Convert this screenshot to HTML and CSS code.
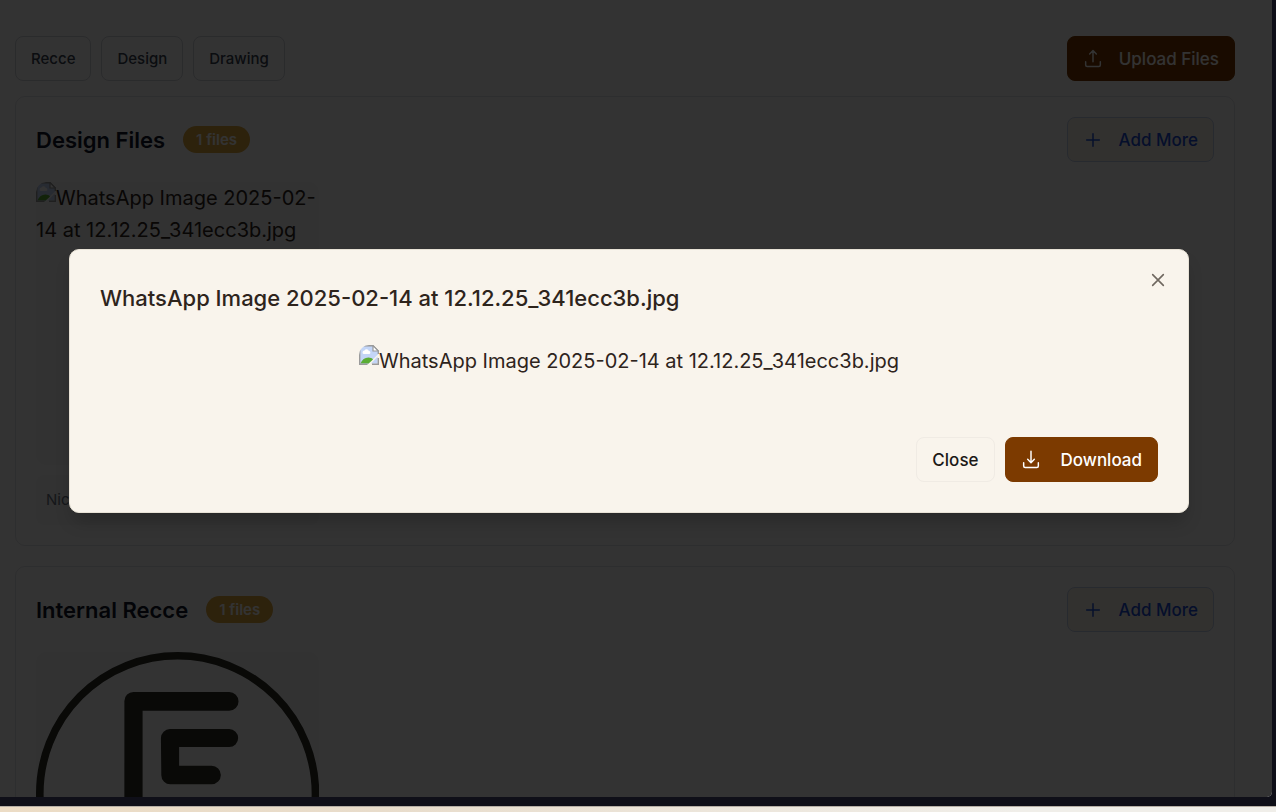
FILE: index.html
```html
<!DOCTYPE html>
<html lang="en">
<head>
<meta charset="utf-8">
<title>Project Files</title>
<link rel="stylesheet" href="styles.css">
</head>
<body>
<svg class="defs" aria-hidden="true">
  <symbol id="i-upload" viewBox="0 0 15 15"><path d="M7.500 9.500V1.300M5 3.700l2.500-2.500L10 3.700M2 9.500V12a1.100 1.100 0 0 0 1.100 1.100h8.800A1.100 1.100 0 0 0 13 12V9.500"/></symbol>
  <symbol id="i-download" viewBox="0 0 15 15"><path d="M7.500 1v8.400M5 7l2.500 2.500L10 7M2 9.500V12a1.100 1.100 0 0 0 1.100 1.100h8.800A1.100 1.100 0 0 0 13 12V9.500"/></symbol>
  <symbol id="i-plus" viewBox="0 0 15 15"><path d="M7.500 2.750v9.500M2.750 7.500h9.500"/></symbol>
  <symbol id="i-close" viewBox="0 0 15 15"><path d="M3.500 3.500l8 8M11.500 3.500l-8 8"/></symbol>
  <symbol id="i-missing" viewBox="0 0 20 20">
    <path d="M.7 .7H14L19.300 6V9L9 19.300H.7z" fill="#c3d5f7"/>
    <path d="M1.400 18.600c1.500-4 4.500-6 8-6 2 0 3.500.7 4.600 1.800L9.600 18.600z" fill="#5bad35"/>
    <path d="M18.600 11.500V18.600H12z" fill="#c3d5f7"/>
    <path d="M.7 .7H14L19.300 6V9M.7 .7V19.300H8.500M13 19.300H19.300V13" fill="none" stroke="#9a9a9a" stroke-width="1.400"/>
    <path d="M14 .7V6h5.300z" fill="#fff" stroke="#9a9a9a" stroke-width="1.200"/>
    <path d="M3.500 7.500a2 2 0 0 1 2-2 2.300 2.300 0 0 1 4.300.5 1.500 1.500 0 0 1 .2 3H5a1.500 1.500 0 0 1-1.500-1.500z" fill="#fff"/>
  </symbol>
</svg>

<div class="screen">
  <main class="page">
    <div class="toolbar">
      <div class="filters">
        <button class="btn btn-filter">Recce</button>
        <button class="btn btn-filter">Design</button>
        <button class="btn btn-filter">Drawing</button>
      </div>
      <button class="btn btn-primary"><svg class="icon"><use href="#i-upload"/></svg>Upload Files</button>
    </div>

    <section class="card">
      <header class="card-head">
        <h2>Design Files</h2><span class="badge">1 files</span>
        <button class="btn btn-add"><svg class="icon"><use href="#i-plus"/></svg>Add More</button>
      </header>
      <div class="grid">
        <article class="file">
          <div class="thumb"><svg class="missing"><use href="#i-missing"/></svg>WhatsApp Image 2025-02-14 at 12.12.25_341ecc3b.jpg</div>
          <p class="note">Nice</p>
        </article>
      </div>
    </section>

    <section class="card">
      <header class="card-head">
        <h2>Internal Recce</h2><span class="badge">1 files</span>
        <button class="btn btn-add"><svg class="icon"><use href="#i-plus"/></svg>Add More</button>
      </header>
      <div class="grid">
        <article class="file">
          <div class="thumb">
            <svg class="logo" viewBox="0 0 283 283" role="img" aria-label="Logo">
              <circle cx="141.500" cy="141.500" r="137.700" fill="#fff" stroke="#2d2d26" stroke-width="7.600"/>
              <path fill="#2d2d26" d="M97.500 40H193a9.300 9.300 0 0 1 0 18.700H106.500V240H88.300V49a9 9 0 0 1 9.200-9z"/>
              <path fill="#2d2d26" d="M134 77H193a9 9 0 0 1 0 18H143V113.700H175.500a9.200 9.200 0 0 1 0 18.400H134.500a9 9 0 0 1-9.300-9L124.800 86a9 9 0 0 1 9.200-9z"/>
            </svg>
          </div>
        </article>
      </div>
    </section>
  </main>

  <div class="backdrop">
    <div class="dialog" role="dialog" aria-modal="true" aria-labelledby="dialog-title">
      <h2 id="dialog-title">WhatsApp Image 2025-02-14 at 12.12.25_341ecc3b.jpg</h2>
      <div class="preview"><svg class="missing"><use href="#i-missing"/></svg>WhatsApp Image 2025-02-14 at 12.12.25_341ecc3b.jpg</div>
      <footer class="actions">
        <button class="btn btn-outline">Close</button>
        <button class="btn btn-primary btn-download"><svg class="icon"><use href="#i-download"/></svg>Download</button>
      </footer>
      <button class="dismiss" aria-label="Dismiss"><svg class="icon"><use href="#i-close"/></svg></button>
    </div>
  </div>
</div>
<div class="desktop"></div>
</body>
</html>
```
FILE: styles.css
```css
* { box-sizing: border-box; }

body {
  margin: 0;
  height: 100vh;
  display: flex;
  flex-direction: column;
  gap: 9px;
  overflow: hidden;
  background: #0f0f18;
  color: #2e241c;
  font: 20px/32px Inter, "Liberation Sans", sans-serif;
}

h2, p { margin: 0; }
.defs { position: absolute; width: 0; height: 0; }

.screen {
  position: relative;
  flex: 1;
  min-height: 0;
  margin-right: 4px;
  overflow: hidden;
  background: #fff;
  border-bottom-right-radius: 5px;
}

.desktop {
  height: 6px;
  background: linear-gradient(90deg, #ecdcc5, #e8dccb 30%, #f0eee9 80%);
  border-top: 1px solid #b5aea5;
}

.page {
  display: flex;
  flex-direction: column;
  padding: 36px 37px 0 15px;
}

.toolbar {
  display: flex;
  justify-content: space-between;
  margin-bottom: 15px;
}
.filters { display: flex; gap: 10px; }

.btn {
  display: inline-flex;
  align-items: center;
  justify-content: center;
  gap: 16px;
  height: 45px;
  padding: 0 15px;
  border: 1px solid #f0ebe4;
  border-radius: 8px;
  background: transparent;
  color: #1c1917;
  font: 500 17px/24px Inter, "Liberation Sans", sans-serif;
  white-space: nowrap;
}
.btn-filter {
  border-color: #d1d5db;
  color: #374151;
  font-size: 15px;
}
.btn-primary {
  border-color: #7c3a00;
  background: #7c3a00;
  color: #fff;
}
.btn-download { gap: 20px; }
.btn-add {
  margin-left: auto;
  border-color: #c4d0e8;
  background: #f9f4ec;
  color: #1d4ed8;
}

.icon {
  width: 20px;
  height: 20px;
  flex: none;
  fill: none;
  stroke: currentColor;
  stroke-width: 1.1;
  stroke-linecap: round;
  stroke-linejoin: round;
}

.card {
  margin-bottom: 20px;
  padding: 20px;
  border: 1px solid #e2e4e8;
  border-radius: 10px;
}
.card-head {
  display: flex;
  align-items: center;
  gap: 18px;
  margin-bottom: 20px;
}
.card-head h2 { color: #0f172a; font-size: 22px; font-weight: 600; }

.badge {
  padding: 0 13px;
  border-radius: 14px;
  background: #e0a83f;
  color: #fff;
  font-size: 15px;
  font-weight: 600;
  line-height: 27px;
}

.grid {
  display: grid;
  grid-template-columns: repeat(4, 1fr);
  gap: 15px;
}
.thumb {
  aspect-ratio: 1;
  margin-bottom: 10px;
  overflow: hidden;
  border-radius: 10px;
  background: #f7f8f9;
}
.logo { display: block; width: 100%; }
.note {
  padding: 13px 10px;
  border-radius: 8px;
  background: #f9fafb;
  color: #6b7280;
  font-size: 15px;
  line-height: 24px;
}

.missing {
  width: 20px;
  height: 20px;
  border-top-left-radius: 10px;
  vertical-align: top;
}

.backdrop {
  position: absolute;
  inset: 0;
  display: flex;
  align-items: center;
  justify-content: center;
  padding: 0 14px 35px 0;
  background: rgba(0, 0, 0, 0.8);
}
.dialog {
  position: relative;
  width: 100%;
  max-width: 1120px;
  padding: 30px;
  border: 1px solid #e8e2d6;
  border-radius: 10px;
  background: #f9f4ec;
  box-shadow: 0 12px 18px -4px rgba(0, 0, 0, 0.2);
}
.dialog h2 { font-size: 22px; font-weight: 500; line-height: 36px; }
.preview {
  display: flex;
  justify-content: center;
  margin: 29px 0 60px;
}
.actions {
  display: flex;
  justify-content: flex-end;
  gap: 10px;
}
.dismiss {
  position: absolute;
  top: 20px;
  right: 20px;
  width: 20px;
  height: 20px;
  padding: 0;
  border: 0;
  background: none;
  color: #6f675f;
}
.dismiss .icon { display: block; stroke-width: 1.2; }
```
